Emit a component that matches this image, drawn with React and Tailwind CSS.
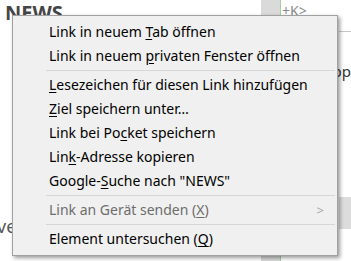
import React from 'react';

const U = ({ children }) => <span className="underline underline-offset-2">{children}</span>;

const Item = ({ children, disabled, arrow }) => (
  <div
    className={`h-[24px] flex items-center pl-[36px] pr-3 ${
      disabled ? 'text-[#6d6d6d]' : 'text-[#000]'
    }`}
  >
    <span className="flex-1 whitespace-nowrap">{children}</span>
    {arrow && <span className="text-[#a8a8a8] text-[13px] mr-[1px]">&gt;</span>}
  </div>
);

const Sep = () => <div className="h-px bg-[#d6d6d6] ml-[33px] mr-[2px] my-[2px]" />;

export default function App() {
  return (
    <div className="relative w-[351px] h-[261px] bg-white overflow-hidden font-['Noto_Sans',sans-serif]">
      {/* page behind the menu */}
      <div className="flex h-full">
        <div className="w-[261px] flex flex-col justify-between">
          <div className="pl-[5px] pt-[3px] text-[20px] font-bold text-[#454545] leading-none">NEWS</div>
          <div className="mb-[26px] -ml-[3px] text-[18px] text-[#555] leading-none">ve</div>
        </div>
        <div className="w-[20px] bg-[#dadada] border-r border-[#9ed39e]" />
        <div className="flex-1 flex flex-col">
          <div className="pt-[4px] pl-[1px] text-[14px] text-[#8a8a8a] leading-none">+K&gt;</div>
          <div className="ml-auto mt-[13px] w-[12px] h-px bg-[#c8c8c8]" />
          <div className="ml-auto mt-[32px] text-[15px] text-[#333] leading-none">pp</div>
          <div className="ml-auto mt-[118px] w-[12px] h-[32px] bg-[#dcdcdc]" />
        </div>
      </div>

      {/* context menu */}
      <div className="absolute left-[12px] top-[15px] w-[326px] bg-[#f0f0f0] border border-[#a0a0a0] shadow-[2px_2px_4px_rgba(0,0,0,0.4)] py-[4px] text-[14px] leading-none">
        <Item>Link in neuem <U>T</U>ab öffnen</Item>
        <Item>Link in neuem <U>p</U>rivaten Fenster öffnen</Item>
        <Sep />
        <Item><U>L</U>esezeichen für diesen Link hinzufügen</Item>
        <Item><U>Z</U>iel speichern unter…</Item>
        <Item>Link bei Po<U>c</U>ket speichern</Item>
        <Item>Lin<U>k</U>-Adresse kopieren</Item>
        <Item>Google-<U>S</U>uche nach "NEWS"</Item>
        <Sep />
        <Item disabled arrow>Link an Gerät senden (<U>X</U>)</Item>
        <Sep />
        <Item>Element untersuchen (<U>Q</U>)</Item>
      </div>
    </div>
  );
}
